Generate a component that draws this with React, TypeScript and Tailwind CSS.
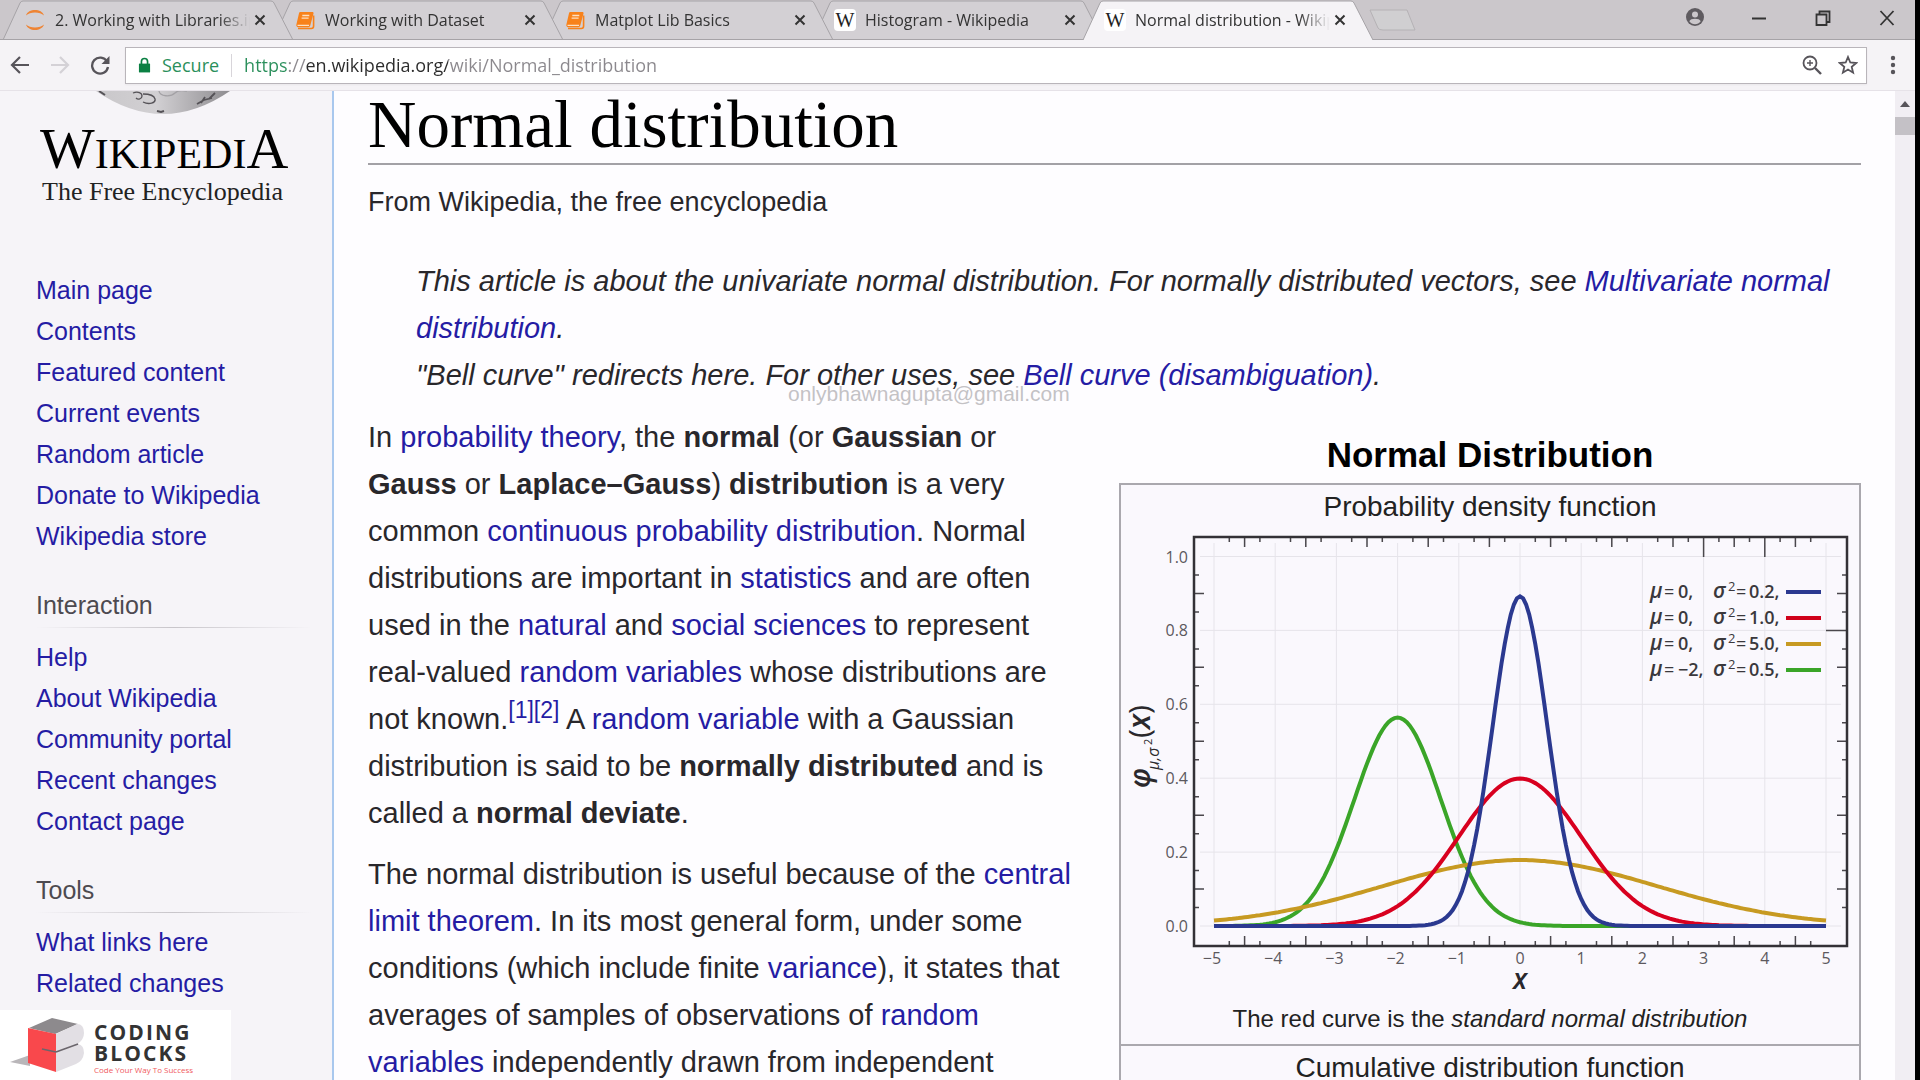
import React from "react";

const UI = "font-['Open_Sans','Noto_Sans',sans-serif]";

/* ---------- browser chrome ---------- */

function JupyterIcon() {
  return (
    <svg viewBox="0 0 22 24" className="h-6 w-[22px]" aria-hidden="true">
      <path d="M2 7.5C4 .2 18 .2 20 7.5 16 3.6 6 3.6 2 7.5Z" fill="#ee8434" />
      <path d="M2 16.5c2 7.3 16 7.3 18 0-4 3.9-14 3.9-18 0Z" fill="#ee8434" />
    </svg>
  );
}

function BookIcon() {
  return (
    <svg viewBox="0 0 20 20" className="h-5 w-5" aria-hidden="true">
      <path d="M5.500 2h11.800c1 0 1.500.7 1.200 1.600l-3.300 12.200c-.3.9-.9 1.400-1.800 1.400H3.200C1.800 17.200 1 16 1.400 14.600L4 3.300C4.200 2.500 4.700 2 5.500 2Z" fill="#f8821a" />
      <path d="M2.500 15.300H14M7.300 5.500h7M6.600 8.200h7" stroke="#fde0c2" strokeWidth="1.300" fill="none" />
      <path d="M18.600 5.500v10.500c0 1.600-.8 2.500-2.300 2.500H3" stroke="#f8821a" strokeWidth="1.600" fill="none" />
    </svg>
  );
}

function WikiIcon() {
  return (
    <span aria-hidden="true" className="flex h-[22px] w-[22px] items-center justify-center rounded-sm bg-white font-['Liberation_Serif',serif] text-xl leading-none text-[#222]">
      W
    </span>
  );
}

function Tab({ title, icon, active, z }: { title: string; icon: React.ReactNode; active?: boolean; z: string }) {
  return (
    <div className={`relative -mr-5 flex h-10 w-[290px] items-center pl-[21px] pr-[23px] ${z}`}>
      <svg viewBox="0 0 290 40" preserveAspectRatio="none" className="absolute inset-0 h-full w-full" aria-hidden="true">
        <path d="M0 40 L17 3 Q18 1 20 1 H268 Q270 1 271 3 L290 40 Z" fill={active ? "#f5f3f6" : "#d3d0d4"} />
        <path d="M0 40 L17 3 Q18 1 20 1 H268 Q270 1 271 3 L290 40" fill="none" stroke="#a6a3a7" />
        {!active && <path d="M0 39.500H290" stroke="#a6a3a7" />}
      </svg>
      <button className="relative flex min-w-0 flex-1 items-center gap-[9px] text-left">
        <span className="flex w-[22px] shrink-0 justify-center">{icon}</span>
        <span className="min-w-0 flex-1 overflow-hidden whitespace-nowrap text-base text-[#333] [mask-image:linear-gradient(90deg,#000_84%,transparent)]">{title}</span>
      </button>
      <button aria-label={`Close ${title}`} className="relative flex h-5 w-5 items-center justify-center">
        <svg viewBox="0 0 12 12" className="h-3 w-3" aria-hidden="true">
          <path d="M1.500 1.500l9 9M10.500 1.500l-9 9" stroke="#333" strokeWidth="2" />
        </svg>
      </button>
    </div>
  );
}

function TabStrip() {
  return (
    <div className="relative flex h-10 bg-[#cbc7cb] pl-[3px]">
      <div className="absolute inset-x-0 bottom-0 h-px bg-[#a6a3a7]" />
      <Tab title="2. Working with Libraries.ipynb" icon={<JupyterIcon />} z="z-[5]" />
      <Tab title="Working with Dataset" icon={<BookIcon />} z="z-[4]" />
      <Tab title="Matplot Lib Basics" icon={<BookIcon />} z="z-[3]" />
      <Tab title="Histogram - Wikipedia" icon={<WikiIcon />} z="z-[2]" />
      <Tab title="Normal distribution - Wikipedia" icon={<WikiIcon />} active z="z-10" />
      <button aria-label="New tab" className="ml-4 flex items-center">
        <svg viewBox="0 0 48 24" className="h-6 w-12" aria-hidden="true">
          <path d="M1 2H38L46 22H14Q10 22 9 20Z" fill="#d0cfd1" stroke="#b5b2b5" />
        </svg>
      </button>
      <div className="ml-auto flex items-start pr-2 pt-1 text-[#333]">
        <button aria-label="Profile" className="mr-3 flex h-7 w-10 items-center justify-center">
          <svg viewBox="0 0 20 20" className="h-5 w-5" aria-hidden="true">
            <circle cx="10" cy="9" r="9" fill="#5f5b60" />
            <circle cx="10" cy="6.500" r="3" fill="#cbc7cb" />
            <path d="M4.300 13.200c1-3.300 10.400-3.300 11.400 0-2.600 3.900-8.800 3.900-11.400 0Z" fill="#cbc7cb" />
          </svg>
        </button>
        <button aria-label="Minimise" className="flex h-7 w-16 items-center justify-center">
          <svg viewBox="0 0 16 16" className="h-4 w-4" aria-hidden="true"><path d="M1 8.500H15" stroke="currentColor" strokeWidth="2" /></svg>
        </button>
        <button aria-label="Restore" className="flex h-7 w-16 items-center justify-center">
          <svg viewBox="0 0 16 16" className="h-4 w-4" fill="none" stroke="currentColor" strokeWidth="1.800" aria-hidden="true">
            <path d="M1.500 4.500h10v10.500h-10zM4.500 4.500V1.500h10v10.500h-3" />
          </svg>
        </button>
        <button aria-label="Close window" className="-mr-3 flex h-7 w-16 items-center justify-center">
          <svg viewBox="0 0 16 16" className="h-4 w-4" aria-hidden="true"><path d="M1.500 1l13 14M14.500 1l-13 14" stroke="currentColor" strokeWidth="1.800" /></svg>
        </button>
      </div>
    </div>
  );
}

function Toolbar() {
  return (
    <div className="flex h-[51px] items-center border-b border-[#e6e2e8] bg-[#f5f3f6] pr-[10px]">
      <button aria-label="Back" className="flex w-10 items-center justify-center">
        <svg viewBox="0 0 20 20" className="h-5 w-5" fill="none" stroke="#57545a" strokeWidth="2.200" aria-hidden="true"><path d="M19 10H2M10 2L2 10l8 8" /></svg>
      </button>
      <button aria-label="Forward" className="flex w-10 items-center justify-center">
        <svg viewBox="0 0 20 20" className="h-5 w-5" fill="none" stroke="#d4d1d6" strokeWidth="2.200" aria-hidden="true"><path d="M1 10h17M10 2l8 8-8 8" /></svg>
      </button>
      <button aria-label="Reload" className="flex w-10 items-center justify-center">
        <svg viewBox="0 0 20 20" className="h-5 w-5" aria-hidden="true">
          <path d="M17 6.500A8 8 0 1 0 18 12" fill="none" stroke="#57545a" strokeWidth="2.300" />
          <path d="M19.500 1v8h-8Z" fill="#57545a" />
        </svg>
      </button>
      <div className="ml-[5px] flex h-[37px] flex-1 items-center border border-[#b9b5ba] bg-white shadow-xs">
        <svg viewBox="0 0 14 16" className="ml-3 h-4 w-[13px]" aria-hidden="true">
          <path d="M1 6.500h12V16H1z" fill="#0b8043" />
          <path d="M3.700 7V4.300a3.300 3.300 0 0 1 6.600 0V7" fill="none" stroke="#0b8043" strokeWidth="1.800" />
        </svg>
        <span className="ml-[11px] text-lg text-[#2a8f5b]">Secure</span>
        <span className="ml-3 h-[23px] w-px bg-[#d8d5da]" />
        <input
          aria-label="Address"
          defaultValue="https://en.wikipedia.org/wiki/Normal_distribution"
          className="ml-3 min-w-0 flex-1 bg-[linear-gradient(90deg,#2a8f5b_44px,#8b888d_44px,#8b888d_62px,#2b2b2b_62px,#2b2b2b_204px,#8b888d_204px)] bg-clip-text text-lg text-transparent outline-none"
        />
        <button aria-label="Zoom" className="flex w-9 items-center justify-center">
          <svg viewBox="0 0 20 20" className="h-5 w-5" fill="none" stroke="#57545a" strokeWidth="1.800" aria-hidden="true">
            <circle cx="8" cy="8" r="6.500" /><path d="M5 8h6M8 5v6" strokeWidth="1.400" /><path d="M13 13l6 6" strokeWidth="2.400" />
          </svg>
        </button>
        <button aria-label="Bookmark this page" className="flex w-9 items-center justify-center">
          <svg viewBox="0 0 20 20" className="h-5 w-5" fill="none" stroke="#57545a" strokeWidth="1.800" aria-hidden="true">
            <path d="M10 2l2.300 5.500 5.900.5-4.500 3.900 1.400 5.800L10 14.600l-5.100 3.100 1.400-5.800L1.800 8l5.900-.5Z" />
          </svg>
        </button>
      </div>
      <button aria-label="Menu" className="ml-[14px] flex w-6 items-center justify-center">
        <svg viewBox="0 0 6 20" className="h-5 w-1.5" fill="#57545a" aria-hidden="true">
          <circle cx="3" cy="3" r="2.200" /><circle cx="3" cy="10" r="2.200" /><circle cx="3" cy="17" r="2.200" />
        </svg>
      </button>
    </div>
  );
}

/* ---------- sidebar ---------- */

function NavGroup({ title, items }: { title?: string; items: string[] }) {
  return (
    <nav aria-label={title ?? "Navigation"}>
      {title && (
        <>
          <h3 className="pb-[5px] leading-[34px] text-[#4d4a50]">{title}</h3>
          <div className="mb-[9px] h-px bg-linear-to-r from-transparent via-[#c8c5ca] to-transparent" />
        </>
      )}
      <ul>
        {items.map((t) => (
          <li key={t} className="leading-[41px]"><a href="#" className="text-[#251ca4]">{t}</a></li>
        ))}
      </ul>
    </nav>
  );
}

function Sidebar() {
  return (
    <aside className="flex w-[332px] shrink-0 flex-col bg-[#f6f4f8] text-[25px]">
      <div className="flex h-[179px] flex-col items-start pl-10">
        <svg viewBox="0 0 140 24" className="ml-[53px] h-6 w-[140px]" aria-hidden="true">
          <defs>
            <linearGradient id="globe" x1="0" x2="1">
              <stop offset="0" stopColor="#c9c7ca" /><stop offset=".45" stopColor="#d2d0d3" /><stop offset="1" stopColor="#8e8c90" />
            </linearGradient>
          </defs>
          <path d="M3 0Q70 46 137 0Z" fill="url(#globe)" />
          <g fill="none" stroke="#555257" strokeWidth="1.300">
            <path d="M40 2c5-2 9 0 9 3s-4 4-6 2M50 11c6 3 13 1 12-3s-8-5-12-5" />
            <path d="M66 0c1 6 12 6 16 2s8-2 12-2" stroke="#a3a1a5" />
            <path d="M64 20l4 1 3-1" strokeWidth="2" />
            <path d="M104 13l7-4 8-2M108 12l4-6M116 8l6-6" strokeWidth="1.800" />
            <path d="M6 0l6 4" strokeWidth="2" />
          </g>
        </svg>
        <a href="#" className="pt-[6px] font-['Liberation_Serif',serif] text-black">
          <span className="block text-[58px] leading-[56px]">W<span className="text-[42px]">IKIPEDI</span>A</span>
          <span className="block pl-[2px] text-[26px] leading-5 text-[#222]">The Free Encyclopedia</span>
        </a>
      </div>
      <div className="flex flex-col gap-[31px] pl-9 pr-5">
        <NavGroup items={["Main page", "Contents", "Featured content", "Current events", "Random article", "Donate to Wikipedia", "Wikipedia store"]} />
        <NavGroup title="Interaction" items={["Help", "About Wikipedia", "Community portal", "Recent changes", "Contact page"]} />
        <NavGroup title="Tools" items={["What links here", "Related changes"]} />
      </div>
    </aside>
  );
}

function CodingBlocks() {
  return (
    <div className="absolute bottom-0 left-0 z-20 flex h-[70px] w-[231px] items-start bg-white pl-[10px] pt-2">
      <svg viewBox="0 0 76 56" className="h-14 w-[76px]" aria-hidden="true">
        <path d="M0 44L20 37V48Z" fill="#b9b6b9" />
        <path d="M19 10L42 0 68 6 45 16Z" fill="#8d8a8d" />
        <path d="M18 10L46 16V54L18 45Z" fill="#f9484c" />
        <path d="M46 16L67 6Q74 6 74 15 74 21 68 26 74 27 74 35 73 43 66 46L46 54Z" fill="#e2dfe4" />
        <path d="M46 34L68 26M32 31l14 3" stroke="#6b666c" strokeWidth="1.500" fill="none" />
      </svg>
      <div className="pl-2 pt-1 font-['Open_Sans',sans-serif]">
        <div className="text-[21px] font-bold leading-[21px] tracking-widest text-[#333]">CODING<br />BLOCKS</div>
        <div className="text-[8px] leading-3 text-[#f05a5e]">Code Your Way To Success</div>
      </div>
    </div>
  );
}

/* ---------- density chart ---------- */

const sx = (x: number) => 398 + x * 61.2;
const sy = (y: number) => 397 - y * 369.5;

function curve(mu: number, v: number) {
  const pts: string[] = [];
  for (let i = 0; i <= 200; i++) {
    const x = -5 + i * 0.05;
    const y = Math.exp(-((x - mu) ** 2) / (2 * v)) / Math.sqrt(2 * Math.PI * v);
    pts.push(`${sx(x).toFixed(1)},${sy(y).toFixed(1)}`);
  }
  return pts.join(" ");
}

const SERIES = [
  { mu: -2, v: 0.5, color: "#3aa528" },
  { mu: 0, v: 5, color: "#c79a22" },
  { mu: 0, v: 1, color: "#d8001f" },
  { mu: 0, v: 0.2, color: "#2b3990" },
];
const LEGEND = [
  { mu: "0,", v: "0.2,", color: "#2b3990" },
  { mu: "0,", v: "1.0,", color: "#d0021b" },
  { mu: "0,", v: "5.0,", color: "#c79a22" },
  { mu: "−2,", v: "0.5,", color: "#3aa528" },
];

function DensityChart() {
  const L = 72, R = 725, T = 8, B = 417;
  const ints = [-5, -4, -3, -2, -1, 0, 1, 2, 3, 4, 5];
  const xt: [number, number][] = [];
  for (let i = -19; i <= 19; i++) if (i % 4 !== 0) xt.push([i / 4, i % 2 === 0 ? 10 : 5]);
  const yt: [number, number][] = [];
  for (let i = 1; i <= 19; i++) if (i % 4 !== 0) yt.push([i / 20, i % 2 === 0 ? 10 : 5]);
  return (
    <svg viewBox="-1 0 738 468" className="block w-full font-['Open_Sans',sans-serif]" role="img" aria-label="Normal distribution probability density functions">
      <g stroke="#e6e4ea">
        {ints.map((x) => <path key={x} d={`M${sx(x)} ${T + 6}V${B - 20}`} />)}
        {[0, 0.2, 0.4, 0.6, 0.8, 1].map((y) => <path key={y} d={`M${L + 6} ${sy(y)}H${R - 6}`} />)}
      </g>
      <g stroke="#4a474c" strokeWidth="1.500">
        {xt.map(([x, l]) => <path key={x} d={`M${sx(x)} ${T}v${l}M${sx(x)} ${B}v${-l}`} />)}
        {yt.map(([y, l]) => <path key={y} d={`M${L} ${sy(y)}h${l}M${R} ${sy(y)}h${-l}`} />)}
        <path d={`M${sx(3)} ${T}v20M${sx(4)} ${T}v20M${R} ${sy(0.8)}h-21`} />
      </g>
      <g fill="none" strokeWidth="4">
        {SERIES.map((s) => <polyline key={s.color} points={curve(s.mu, s.v)} stroke={s.color} />)}
      </g>
      <rect x={L} y={T} width={R - L} height={B - T} fill="none" stroke="#333136" strokeWidth="2.500" />
      <g fill="#5c595e" fontSize="16">
        {ints.map((x) => <text key={x} x={x < 0 ? sx(x) - 2 : sx(x)} y="435" textAnchor="middle">{String(x).replace("-", "−")}</text>)}
        {["0.0", "0.2", "0.4", "0.6", "0.8", "1.0"].map((t) => <text key={t} x="66" y={sy(Number(t)) + 6} textAnchor="end">{t}</text>)}
      </g>
      <text x={sx(0)} y="460" textAnchor="middle" fontSize="28" fontStyle="italic" fontWeight="600" fill="#2a282c">x</text>
      <g transform="translate(28 259) rotate(-90)" fill="#2a282c" fontStyle="italic">
        <text x="0" y="0" fontSize="28" fontWeight="600">φ</text>
        <text x="18" y="9" fontSize="16">μ,σ</text>
        <text x="43" y="2" fontSize="11" fontStyle="normal">2</text>
        <text x="50" y="0" fontSize="30"><tspan fontStyle="normal">(</tspan><tspan fontWeight="600">x</tspan><tspan fontStyle="normal">)</tspan></text>
      </g>
      <g fill="#3a383c" fontSize="18">
        {LEGEND.map((r, i) => {
          const y = 69 + i * 26;
          return (
            <g key={r.v}>
              <text x="528" y={y} fontStyle="italic" fontSize="21" fontWeight="600">μ</text>
              <text x="542" y={y}>=</text>
              <text x="556" y={y} fontWeight="600">{r.mu}</text>
              <text x="591" y={y} fontStyle="italic" fontSize="21" fontWeight="600">σ</text>
              <text x="606" y={y - 7} fontSize="13">2</text>
              <text x="614" y={y}>=</text>
              <text x="627" y={y} fontWeight="600">{r.v}</text>
              <path d={`M664 ${y - 6}h35`} stroke={r.color} strokeWidth="4" />
            </g>
          );
        })}
      </g>
    </svg>
  );
}

function Infobox() {
  return (
    <table className="mt-[14px] w-[742px] shrink-0 border-separate border-spacing-0 border-2 border-[#aaa8ae] bg-[#faf8fd] text-center text-[#222]">
      <caption className="pb-px text-[35px] font-bold leading-[54px] text-black">Normal Distribution</caption>
      <tbody>
        <tr><th scope="row" className="text-[28px] font-normal leading-[44px]">Probability density function</th></tr>
        <tr>
          <td className="border-b-2 border-[#aaa8ae] text-2xl">
            <DensityChart />
            <p className="pb-[7px] pt-[3px] leading-[37px]">The red curve is the <i>standard normal distribution</i></p>
          </td>
        </tr>
        <tr><th scope="row" className="text-[28px] font-normal leading-[44px]">Cumulative distribution function</th></tr>
      </tbody>
    </table>
  );
}

/* ---------- article ---------- */

function A({ children }: { children: React.ReactNode }) {
  return <a href="#" className="text-[#251ca4]">{children}</a>;
}

function Article() {
  return (
    <main className="min-w-0 flex-1 border-l-2 border-[#a9c8ee] bg-[#fefdff] pl-[34px] pr-[34px] text-[29px] leading-[47px] text-[#29272b]">
      <h1 className="border-b-2 border-[#a3a1a6] pb-[6px] font-['Liberation_Serif',serif] text-[67px] leading-[66px] text-black">Normal distribution</h1>
      <p className="pt-[14px] text-[27px] leading-[47px]">From Wikipedia, the free encyclopedia</p>
      <div className="pl-12 pt-8 italic">
        <p>This article is about the univariate normal distribution. For normally distributed vectors, see <A>Multivariate normal distribution</A>.</p>
        <p>"Bell curve" redirects here. For other uses, see <A>Bell curve (disambiguation)</A>.</p>
      </div>
      <div className="flex items-start gap-[28px] pt-[15px]">
        <div className="flex min-w-0 flex-1 flex-col gap-[14px]">
          <p>
            In <A>probability theory</A>, the <b>normal</b> (or <b>Gaussian</b> or <b>Gauss</b> or <b>Laplace–Gauss</b>) <b>distribution</b> is a very common <A>continuous probability distribution</A>. Normal distributions are important in <A>statistics</A> and are often used in the <A>natural</A> and <A>social sciences</A> to represent real-valued <A>random variables</A> whose distributions are not known.<sup className="text-[23px] leading-none"><A>[1][2]</A></sup> A <A>random variable</A> with a Gaussian distribution is said to be <b>normally distributed</b> and is called a <b>normal deviate</b>.
          </p>
          <p>
            The normal distribution is useful because of the <A>central limit theorem</A>. In its most general form, under some conditions (which include finite <A>variance</A>), it states that averages of samples of observations of <A>random variables</A> independently drawn from independent distributions converge in distribution to the normal.
          </p>
        </div>
        <Infobox />
      </div>
    </main>
  );
}

export default function App() {
  return (
    <div className="flex h-screen overflow-hidden bg-black pr-[5px] font-['Liberation_Sans',Arial,sans-serif]">
      <div className="relative flex min-w-0 flex-1 flex-col bg-white">
        <header className={UI}>
          <TabStrip />
          <Toolbar />
        </header>
        <div className="flex min-h-0 flex-1 overflow-hidden">
          <Sidebar />
          <Article />
          <div className="flex w-5 shrink-0 flex-col items-center bg-[#f1eef3]">
            <svg viewBox="0 0 10 6" className="mb-[10px] mt-[10px] h-1.5 w-2.5" aria-hidden="true"><path d="M5 0l5 6H0Z" fill="#57545a" /></svg>
            <div className="h-[18px] w-full bg-[#c4c1c6]" />
          </div>
        </div>
        <CodingBlocks />
        <p className="pointer-events-none absolute left-[788px] top-[382px] z-20 text-[21px] leading-6 text-[#b4b2b6]/80">onlybhawnagupta@gmail.com</p>
      </div>
    </div>
  );
}
